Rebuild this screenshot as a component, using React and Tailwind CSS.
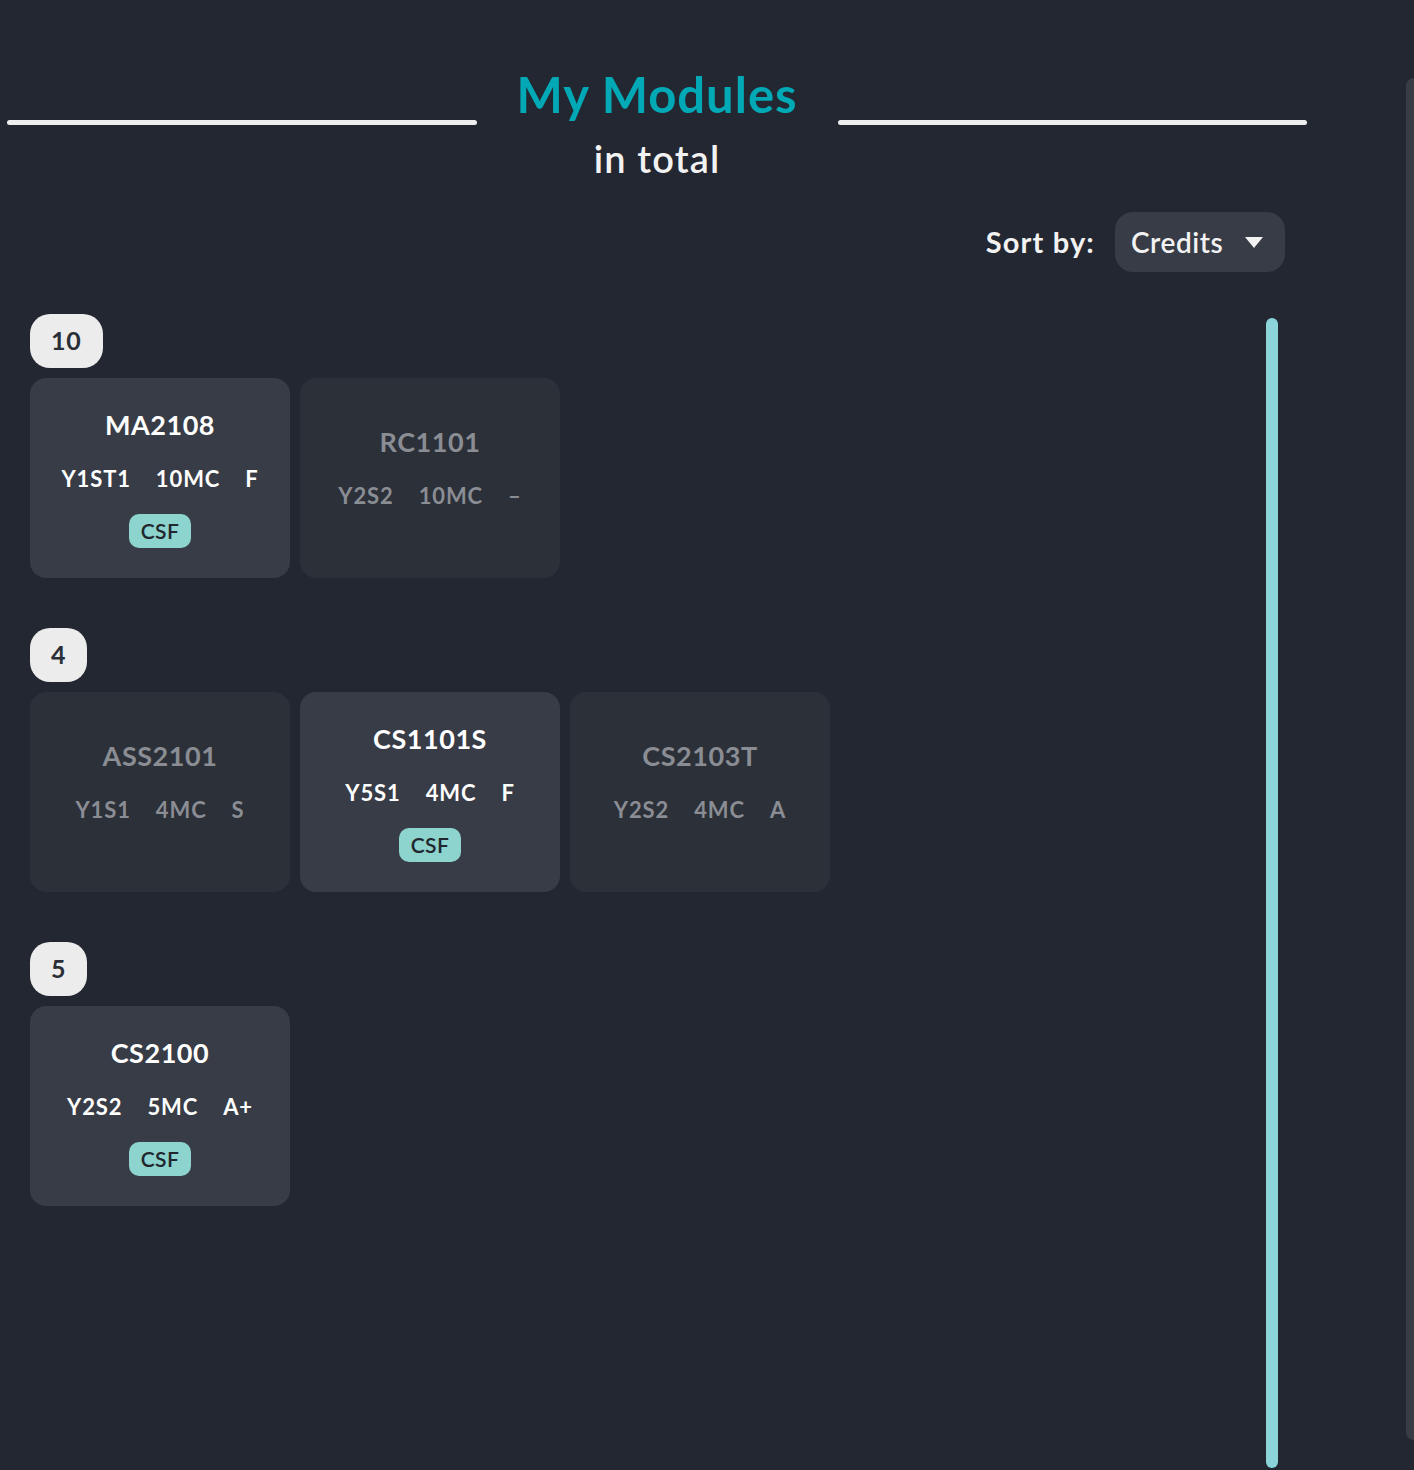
import React from 'react';

const groups = [
  {
    credits: '10',
    modules: [
      { code: 'MA2108', sem: 'Y1ST1', mc: '10MC', grade: 'F', tag: 'CSF', active: true },
      { code: 'RC1101', sem: 'Y2S2', mc: '10MC', grade: '–', active: false },
    ],
  },
  {
    credits: '4',
    modules: [
      { code: 'ASS2101', sem: 'Y1S1', mc: '4MC', grade: 'S', active: false },
      { code: 'CS1101S', sem: 'Y5S1', mc: '4MC', grade: 'F', tag: 'CSF', active: true },
      { code: 'CS2103T', sem: 'Y2S2', mc: '4MC', grade: 'A', active: false },
    ],
  },
  {
    credits: '5',
    modules: [
      { code: 'CS2100', sem: 'Y2S2', mc: '5MC', grade: 'A+', tag: 'CSF', active: true },
    ],
  },
];

function ModuleCard({ mod }) {
  return (
    <div
      className={
        mod.active
          ? 'w-[260px] h-[200px] rounded-[16px] bg-[#383c46] flex flex-col items-center justify-center text-white'
          : 'w-[260px] h-[200px] rounded-[16px] bg-[#2c3039] flex flex-col items-center justify-center text-[#8a8d93]'
      }
    >
      <div className="text-[27px] leading-[34px] font-bold tracking-[0.02em]">{mod.code}</div>
      <div className="mt-[23px] flex gap-[25px] text-[22px] leading-[28px] font-bold tracking-[0.04em]">
        <span>{mod.sem}</span>
        <span>{mod.mc}</span>
        <span>{mod.grade}</span>
      </div>
      {mod.tag ? (
        <div className="mt-[21px] h-[34px] px-[12px] rounded-[10px] bg-[#8cd4cd] text-[#22262e] text-[21px] font-semibold tracking-[0.02em] flex items-center">
          {mod.tag}
        </div>
      ) : (
        <div className="mt-[21px] h-0" />
      )}
    </div>
  );
}

export default function App() {
  return (
    <div
      className="w-[1414px] h-[1470px] overflow-hidden bg-[#222731] flex"
      style={{ fontFamily: 'Lato, "Noto Sans", sans-serif' }}
    >
      <div className="w-[1406px] shrink-0 flex flex-col">
        {/* header */}
        <div className="w-[1314px] flex items-start px-[7px] pt-[64px]">
          <div className="flex-1 h-[5px] mt-[56px] rounded-full bg-[#eeeeee]" />
          <div className="w-[361px] flex flex-col items-center">
            <div className="text-[49px] leading-[60px] font-bold tracking-[0.02em] text-[#00a9b5]">My Modules</div>
            <div className="mt-[12px] text-[38px] leading-[44px] font-semibold tracking-[0.03em] text-[#f2f2f2]">in total</div>
          </div>
          <div className="flex-1 h-[5px] mt-[56px] rounded-full bg-[#eeeeee]" />
        </div>

        {/* sort */}
        <div className="w-[1285px] mt-[32px] flex justify-end items-center">
          <span className="text-[29px] font-bold tracking-[0.04em] text-[#f2f2f2] mr-[20px]">Sort by:</span>
          <button className="w-[170px] h-[60px] rounded-[18px] bg-[#383c46] flex items-center pl-[16px] pr-[22px]">
            <span className="text-[28px] font-semibold tracking-[0.02em] text-[#f2f2f2]">Credits</span>
            <svg className="ml-auto" width="18" height="11" viewBox="0 0 18 11">
              <polygon points="0,0 18,0 9,11" fill="#f2f2f2" />
            </svg>
          </button>
        </div>

        {/* body */}
        <div className="mt-[42px] flex flex-1 min-h-0">
          <div className="flex-1 pl-[30px] flex flex-col gap-[50px]">
            {groups.map((g) => (
              <div key={g.credits} className="flex flex-col gap-[10px]">
                <div className="self-start h-[54px] min-w-[56px] px-[21px] rounded-[20px] bg-[#ececec] text-[#2a2e36] text-[25px] font-bold tracking-[0.03em] flex items-center justify-center">
                  {g.credits}
                </div>
                <div className="flex gap-[10px]">
                  {g.modules.map((m) => (
                    <ModuleCard key={m.code} mod={m} />
                  ))}
                </div>
              </div>
            ))}
          </div>
          <div className="w-[12px] h-[1150px] mt-[4px] rounded-full bg-[#8bd5da] mr-[128px]" />
        </div>
      </div>
      <div className="flex-1 mt-[78px] mb-[30px] rounded-tl-[30px] rounded-bl-[30px] bg-[#383c45]" />
    </div>
  );
}
